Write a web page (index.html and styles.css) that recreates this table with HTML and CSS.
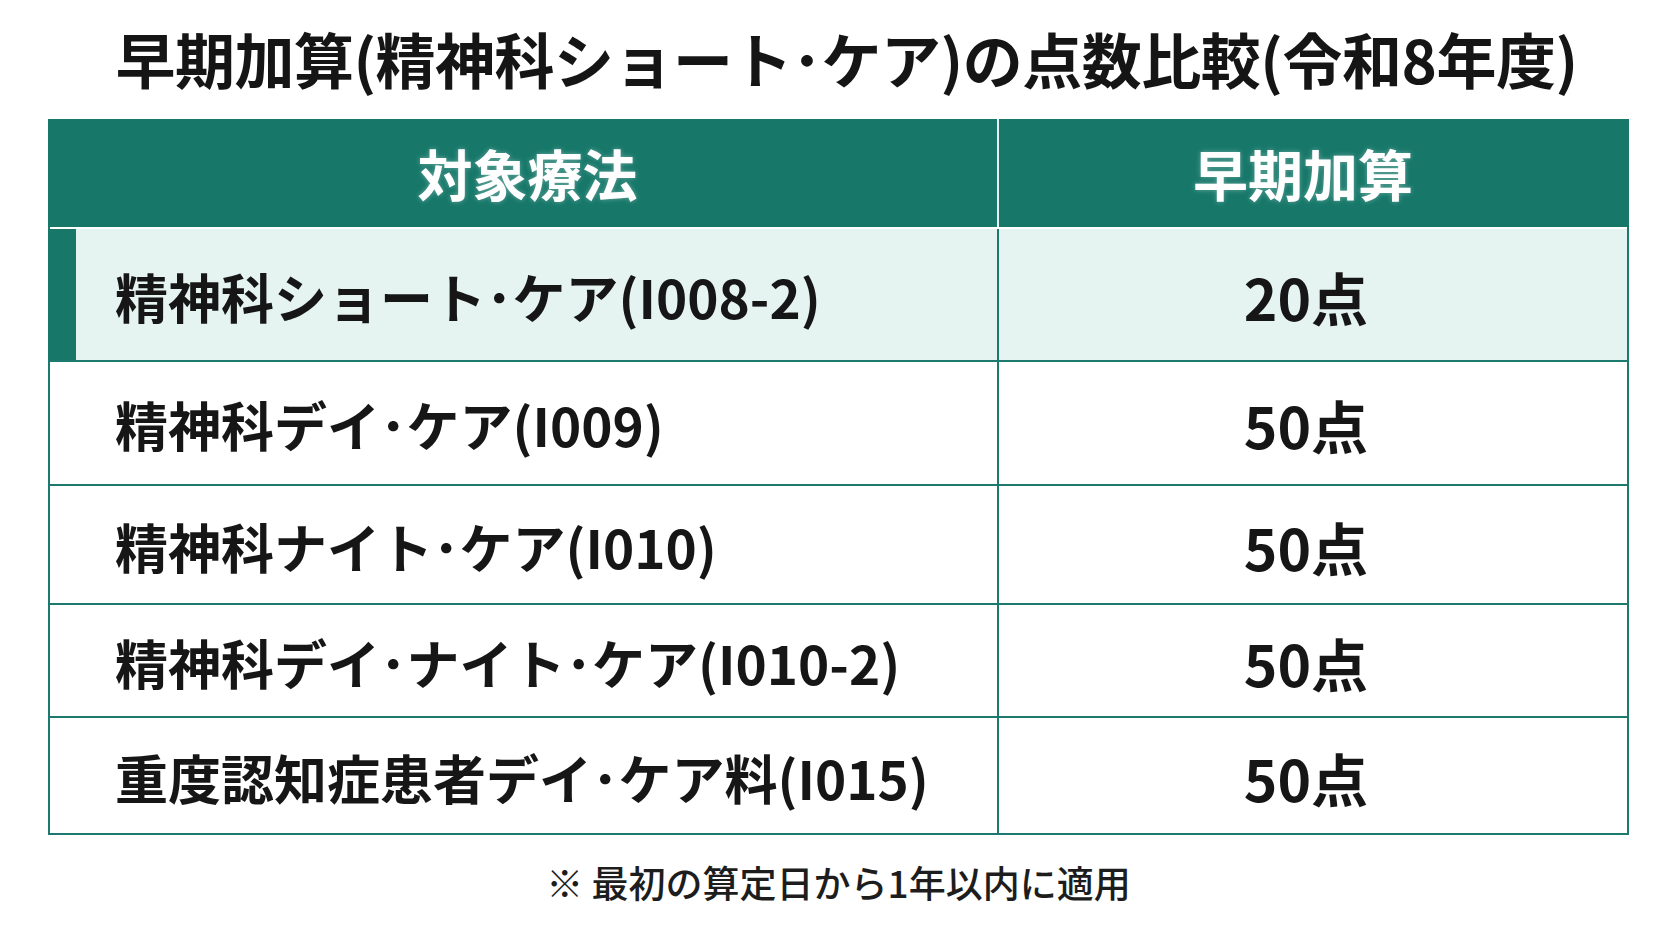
FILE: index.html
```html
<!DOCTYPE html>
<html lang="ja">
<head>
<meta charset="utf-8">
<title>早期加算の点数比較</title>
<link rel="stylesheet" href="styles.css">
</head>
<body>
<main class="page">
  <h1 class="title">早期加算(精神科ショート･ケア)の点数比較(令和8年度)</h1>
  <div class="table">
    <div class="row head">
      <div class="cell name">対象療法</div>
      <div class="cell pts">早期加算</div>
    </div>
    <div class="row body r1 highlight">
      <div class="cell name">精神科ショート･ケア(I008-2)</div>
      <div class="cell pts">20点</div>
    </div>
    <div class="row body r2">
      <div class="cell name">精神科デイ･ケア(I009)</div>
      <div class="cell pts">50点</div>
    </div>
    <div class="row body r3">
      <div class="cell name">精神科ナイト･ケア(I010)</div>
      <div class="cell pts">50点</div>
    </div>
    <div class="row body r4">
      <div class="cell name">精神科デイ･ナイト･ケア(I010-2)</div>
      <div class="cell pts">50点</div>
    </div>
    <div class="row body r5">
      <div class="cell name">重度認知症患者デイ･ケア料(I015)</div>
      <div class="cell pts">50点</div>
    </div>
  </div>
  <p class="note">※ 最初の算定日から1年以内に適用</p>
</main>
</body>
</html>
```

FILE: styles.css
```css
html, body {
  margin: 0;
  padding: 0;
  background: #ffffff;
}
body {
  width: 1672px;
  height: 941px;
  overflow: hidden;
  font-family: "Noto Sans CJK JP", "Noto Sans", sans-serif;
  color: #161616;
}
.page {
  display: flex;
  flex-direction: column;
  padding-left: 48px;
}
.title {
  margin: 0;
  height: 119px;
  width: 1581px;
  display: flex;
  align-items: center;
  justify-content: center;
  padding-left: 16px;
  padding-bottom: 4px;
  box-sizing: border-box;
  font-size: 60px;
  font-weight: 700;
  letter-spacing: -0.5px;
  color: #151515;
  white-space: nowrap;
}
.table {
  width: 1581px;
  box-sizing: border-box;
  border: 2px solid #1b7a6d;
  border-top: none;
  background: #ffffff;
}
.row {
  display: grid;
  grid-template-columns: 949px 1fr;
}
.head {
  height: 108px;
  background: #17786a;
  color: #ffffff;
  margin: 0 -2px;
  padding: 0 2px;
}
.head .cell {
  font-size: 55px;
  padding-top: 0;
  padding-bottom: 3px;
  text-shadow: 0 0 5px rgba(255, 255, 255, 0.35);
}
.head .name {
  justify-content: center;
  border-right: 2px solid #e8f3f1;
  padding-left: 8px;
}
.head .pts {
  padding-right: 20px;
}
.cell {
  display: flex;
  align-items: center;
  font-weight: 700;
  font-size: 53px;
  box-sizing: border-box;
  padding-top: 2px;
  white-space: nowrap;
}
.name {
  padding-left: 65px;
}
.body .name {
  border-right: 2px solid #1b7a6d;
}
.pts {
  justify-content: center;
  padding-right: 14px;
}
.body .pts {
  font-size: 57px;
}
.body {
  border-bottom: 2px solid #1b7a6d;
}
.body:last-child {
  border-bottom: none;
}
.highlight {
  margin-top: 2px;
  background: #e5f4f1;
}
.highlight .name {
  border-left: 28px solid #17786a;
  margin-left: -2px;
  padding-left: 39px;
}
.r1 { height: 131px; }
.r2 { height: 122px; }
.r3 { height: 117px; }
.r4 { height: 111px; }
.r5 { height: 115px; }
.note {
  margin: 25px 0 0;
  width: 1581px;
  text-align: center;
  font-size: 37px;
  font-weight: 500;
  color: #1d1d1d;
  line-height: 1.2;
}
```
